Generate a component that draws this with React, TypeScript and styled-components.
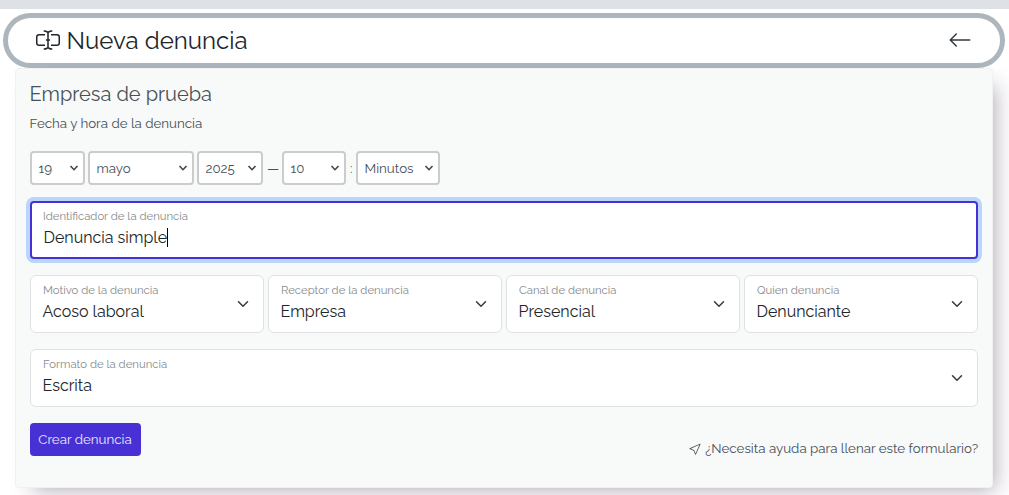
import React from "react";
import styled, { createGlobalStyle } from "styled-components";
import { BsArrowLeft, BsCursor, BsInputCursorText } from "react-icons/bs";

const GlobalStyle = createGlobalStyle`
  * { box-sizing: border-box; }
  body {
    margin: 0;
    background: #fff;
    color: #212529;
    font-family: Raleway, Lato, sans-serif;
    overflow: hidden;
  }
`;

const Page = styled.div`
  height: 495px;
  display: flex;
  flex-direction: column;
  overflow: hidden;
`;

const TopStrip = styled.div`
  height: 9px;
  flex: none;
  background: #dee2e6;
`;

const TitleBar = styled.header`
  flex: none;
  height: 55px;
  margin: 4px 4px 0 3px;
  padding: 0 28px;
  border: 5px solid #adb5bd;
  border-radius: 28px;
  background: #fff;
  display: flex;
  align-items: center;
  justify-content: space-between;

  svg {
    margin-bottom: 2px;
  }
`;

const TitleGroup = styled.div`
  display: flex;
  align-items: center;
  gap: 6.500px;
`;

const Title = styled.h1`
  margin: 0;
  font-size: 24px;
  line-height: 30px;
  font-weight: 400;
`;

const BackIcon = styled(BsArrowLeft)`
  color: #343a40;
`;

const Card = styled.main`
  flex: none;
  height: 420px;
  margin: 0 16px 0 15px;
  padding: 11px 14px 0;
  border: 1px solid #f0f1f2;
  border-radius: 4px;
  background: #f8faf9;
  box-shadow: 10px 10px 20px -8px rgba(55, 30, 60, 0.38);
`;

const Company = styled.h2`
  margin: 0 0 0 -0.5px;
  height: 28px;
  font-size: 20px;
  line-height: 28px;
  font-weight: 400;
  color: #495057;
`;

const Caption = styled.div`
  height: 20px;
  margin-top: 5px;
  margin-left: -0.5px;
  font-size: 13.333px;
  line-height: 20px;
  color: #495057;
`;

const DateRow = styled.div`
  display: flex;
  align-items: center;
  height: 34px;
  margin-top: 18px;
  font-size: 13.333px;
  color: #495057;
`;

const DateBox = styled.div<{ $width: number; $gap: number }>`
  display: flex;
  align-items: center;
  justify-content: space-between;
  width: ${(p) => p.$width}px;
  height: 34px;
  margin-right: ${(p) => p.$gap}px;
  padding: 0 4px 0 6.500px;
  border: 2px solid #ccc;
  border-radius: 4px;
  background: #fff;
`;

const Separator = styled.span<{ $width: number }>`
  width: ${(p) => p.$width}px;
`;

const Field = styled.div<{ $focused?: boolean }>`
  display: flex;
  align-items: center;
  justify-content: space-between;
  flex: 1;
  height: 58px;
  padding: ${(p) => (p.$focused ? "0 11px" : "0 12px")};
  border: ${(p) => (p.$focused ? "2px solid #4731d4" : "1px solid #dee2e6")};
  border-radius: ${(p) => (p.$focused ? 4 : 6)}px;
  background: #fff;
  box-shadow: ${(p) => (p.$focused ? "0 0 0 4px #bad6fb" : "none")};
`;

const FieldRow = styled.div`
  display: flex;
  gap: 4px;
  margin-top: 16px;
`;

const FieldText = styled.div`
  display: flex;
  flex-direction: column;
  padding-bottom: 1px;
`;

const Label = styled.span`
  height: 16px;
  font-size: 11.333px;
  line-height: 16px;
  color: #86898c;
`;

const Value = styled.span<{ $shift: number }>`
  display: flex;
  align-items: center;
  height: 27px;
  margin-left: ${(p) => p.$shift}px;
  font-size: 16px;
  line-height: 27px;
`;

const Caret = styled.i`
  width: 1px;
  height: 19px;
  margin-left: -0.5px;
  background: #000;
`;

const Footer = styled.footer`
  display: flex;
  justify-content: space-between;
  margin-top: 16px;
`;

const Submit = styled.button`
  width: 111px;
  height: 33px;
  padding: 0 1px 0 0;
  border: 0;
  border-radius: 4px;
  background: #4731d4;
  color: #e9e6fb;
  font: 400 13.333px/33px Raleway, Lato, sans-serif;
`;

const Help = styled.a`
  display: flex;
  align-items: center;
  gap: 3.500px;
  height: 20px;
  margin-top: 15px;
  font-size: 13.333px;
  line-height: 20px;
  color: #495057;
`;

const Chevron = () => (
  <svg width="16" height="12" viewBox="0 0 16 16" fill="none" stroke="#343a40" strokeWidth="2" strokeLinecap="round" strokeLinejoin="round">
    <path d="m2 5 6 6 6-6" />
  </svg>
);

const SmallChevron = () => (
  <svg width="10" height="8" viewBox="0 0 10 8" fill="none" stroke="#444" strokeWidth="1.6">
    <path d="m1.500 2 3.500 3.700L8.500 2" />
  </svg>
);

type DateSelectProps = { text: string; width: number; gap?: number };
const DateSelect = ({ text, width, gap = 3 }: DateSelectProps) => (
  <DateBox $width={width} $gap={gap}>
    <span>{text}</span>
    <SmallChevron />
  </DateBox>
);

type SelectProps = { label: string; value: string };
const SelectField = ({ label, value }: SelectProps) => (
  <Field>
    <FieldText>
      <Label>{label}</Label>
      <Value $shift={-0.5}>{value}</Value>
    </FieldText>
    <Chevron />
  </Field>
);

export default function App() {
  return (
    <Page>
      <GlobalStyle />
      <TopStrip />
      <TitleBar>
        <TitleGroup>
          <BsInputCursorText size={24} />
          <Title>Nueva denuncia</Title>
        </TitleGroup>
        <BackIcon size={24} />
      </TitleBar>
      <Card>
        <Company>Empresa de prueba</Company>
        <Caption>Fecha y hora de la denuncia</Caption>
        <DateRow>
          <DateSelect text="19" width={55} />
          <DateSelect text="mayo" width={106} />
          <DateSelect text="2025" width={66} gap={4} />
          <Separator $width={15}>—</Separator>
          <DateSelect text="10" width={64} gap={4} />
          <Separator $width={6}>:</Separator>
          <DateSelect text="Minutos" width={84} />
        </DateRow>
        <FieldRow>
          <Field $focused>
            <FieldText>
              <Label>Identificador de la denuncia</Label>
              <Value $shift={0.5}>Denuncia simple<Caret /></Value>
            </FieldText>
          </Field>
        </FieldRow>
        <FieldRow>
          <SelectField label="Motivo de la denuncia" value="Acoso laboral" />
          <SelectField label="Receptor de la denuncia" value="Empresa" />
          <SelectField label="Canal de denuncia" value="Presencial" />
          <SelectField label="Quien denuncia" value="Denunciante" />
        </FieldRow>
        <FieldRow>
          <SelectField label="Formato de la denuncia" value="Escrita" />
        </FieldRow>
        <Footer>
          <Submit>Crear denuncia</Submit>
          <Help><BsCursor size={13} /><span>¿Necesita ayuda para llenar este formulario?</span></Help>
        </Footer>
      </Card>
    </Page>
  );
}
